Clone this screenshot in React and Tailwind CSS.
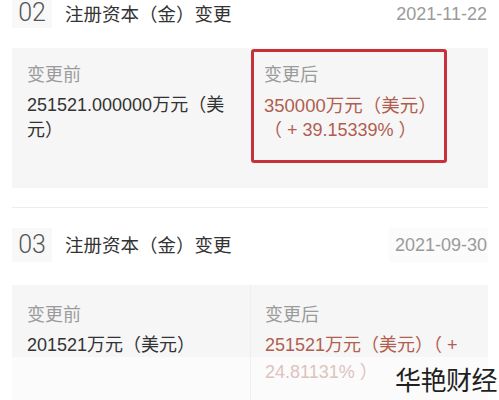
import React from 'react';

const records = [
    {
        no: '02',
        date: '2021-11-22',
        before: ['251521.000000万元（美', '元）'],
        after: ['350000万元（美元）', '（ + 39.15339% ）'],
    },
    {
        no: '03',
        date: '2021-09-30',
        before: ['201521万元（美元）'],
        after: ['251521万元（美元）（ +', '24.81131% ）'],
    },
];

export default function App() {
    return (
        <div
            className="relative w-[499px] h-[400px] overflow-hidden bg-white text-[#333]"
            style={{ fontFamily: '"Liberation Sans", "Noto Sans CJK SC", sans-serif' }}
        >
            <div className="ml-3 w-[476px]">
                {/* Record 02 */}
                <div className="flex items-center h-[28px]">
                    <div className="w-10 h-[28px] pb-[3px] flex items-center justify-center bg-[#f8f8f8] text-[25px] leading-[25px] font-light text-[#555]" style={{ fontFamily: 'Roboto, "Liberation Sans", sans-serif' }}>
                        02
                    </div>
                    <div className="ml-[13px] text-[18.5px] leading-[25px]">注册资本（金）变更</div>
                    <div className="ml-auto pr-px text-[18px] text-[#9a9a9a]">{records[0].date}</div>
                </div>

                <div className="relative mt-5 h-[140px] flex bg-[#f6f6f6] text-[18px] leading-[25px]">
                    <div className="w-[238px] pl-[15px] pt-[15px]">
                        <div className="text-[#9b9b9b]">变更前</div>
                        <div className="mt-[5px] whitespace-nowrap">
                            {records[0].before.map((l) => (
                                <div key={l}>{l}</div>
                            ))}
                        </div>
                    </div>
                    <div className="flex-1 pl-[14px] pt-[15px]">
                        <div className="text-[#9b9b9b]">变更后</div>
                        <div className="mt-[5px] whitespace-nowrap text-[#b15e50]">
                            <div className="text-[18.5px]">{records[0].after[0]}</div>
                            <div>{records[0].after[1]}</div>
                        </div>
                    </div>
                    <div className="absolute left-[239px] top-px w-[196px] h-[114px] border-[3px] border-[#c5323a] rounded-[3px]"></div>
                </div>

                <div className="mt-[19px] h-px bg-[#ececec]"></div>

                {/* Record 03 */}
                <div className="mt-5 flex items-center h-[34px]">
                    <div className="w-10 h-[34px] flex items-center justify-center bg-[#f8f8f8] text-[25px] font-light text-[#555]" style={{ fontFamily: 'Roboto, "Liberation Sans", sans-serif' }}>
                        03
                    </div>
                    <div className="ml-[13px] text-[18.5px] leading-[25px]">注册资本（金）变更</div>
                    <div className="ml-auto h-[34px] flex items-center pl-[6px] pr-px bg-[#fbfbfb] text-[18px] text-[#9a9a9a]">{records[1].date}</div>
                </div>

                <div className="mt-[23px] h-[140px] flex bg-[linear-gradient(#f6f6f6_0,#f6f6f6_72px,#fbfbfb_72px)] text-[18px] leading-[25px]">
                    <div className="w-[238px] pl-[15px] pt-[18px]">
                        <div className="text-[#9b9b9b]">变更前</div>
                        <div className="mt-[5px] whitespace-nowrap">{records[1].before[0]}</div>
                    </div>
                    <div className="flex-1 pl-[14px] pt-[18px] border-l border-[#efefef]">
                        <div className="text-[#9b9b9b]">变更后</div>
                        <div className="mt-[5px] whitespace-nowrap text-[#b15e50]">{records[1].after[0]}</div>
                        <div className="mt-[2px] whitespace-nowrap text-[#dcc3be]">{records[1].after[1]}</div>
                    </div>
                </div>
            </div>

            {/* Watermark */}
            <div
                className="absolute left-[395px] top-[362px] text-[26px] leading-[34px] text-[#1f1f1f] tracking-[-0.5px]"
                style={{ fontFamily: '"Noto Sans CJK SC", sans-serif' }}
            >
                华艳财经
            </div>
        </div>
    );
}
